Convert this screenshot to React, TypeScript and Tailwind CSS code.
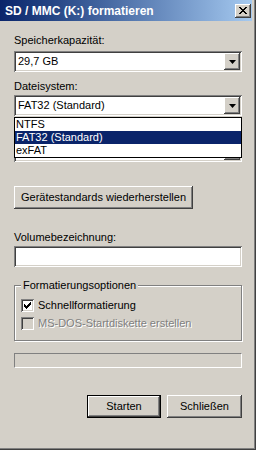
import React from "react";

const raised =
  "shadow-[inset_-1px_-1px_#404040,inset_1px_1px_#ffffff,inset_-2px_-2px_#808080,inset_2px_2px_#d4d0c8]";
const sunken =
  "shadow-[inset_1px_1px_#808080,inset_-1px_-1px_#ffffff,inset_2px_2px_#404040,inset_-2px_-2px_#d4d0c8]";

function DropButton() {
  return (
    <div className={`w-[16px] h-[17px] bg-[#d4d0c8] flex items-center justify-center ${raised}`}>
      <svg width="7" height="4" viewBox="0 0 7 4" className="mt-[1px]">
        <polygon points="0,0 7,0 3.5,4" fill="#000" />
      </svg>
    </div>
  );
}

function Combo({ value }: { value: string }) {
  return (
    <div className={`h-[21px] w-full bg-white flex items-center justify-between pl-[4px] pr-[2px] ${sunken}`}>
      <span className="leading-[13px]">{value}</span>
      <DropButton />
    </div>
  );
}

function CheckBox({ checked, disabled }: { checked?: boolean; disabled?: boolean }) {
  return (
    <div
      className={`w-[13px] h-[13px] shrink-0 flex items-center justify-center ${sunken} ${
        disabled ? "bg-[#d4d0c8]" : "bg-white"
      }`}
    >
      {checked && (
        <svg width="7" height="7" viewBox="0 0 7 7" shapeRendering="crispEdges">
          <path d="M0 2h1v1h1v1h1v-1h1v-1h1v-1h1v-1h1v3h-1v1h-1v1h-1v1h-1v1h-1v-1h-1v-1h-1z" fill="#000" />
        </svg>
      )}
    </div>
  );
}

export default function App() {
  return (
    <div className="w-[256px] h-[450px] bg-[#d4d0c8] text-[11px] text-black font-['Liberation_Sans',Arial,sans-serif] flex flex-col relative shadow-[inset_-1px_-1px_#404040,inset_-2px_-2px_#808080] overflow-hidden">
      {/* Title bar */}
      <div className="h-[21px] mr-[4px] bg-linear-to-r from-[#0a246a] to-[#a6caf0] flex items-center justify-between pl-[5px] pr-[1px]">
        <span className="text-white font-bold text-[12px] leading-[14px]">SD / MMC (K:) formatieren</span>
        <div className={`w-[16px] h-[14px] bg-[#d4d0c8] flex items-center justify-center ${raised}`}>
          <svg width="8" height="7" viewBox="0 0 8 7" shapeRendering="crispEdges">
            <path
              d="M0 0h2v1h1v1h2v-1h1v-1h2v1h-1v1h-1v1h-1v1h1v1h1v1h1v1h-2v-1h-1v-1h-2v1h-1v1h-2v-1h1v-1h1v-1h1v-1h-1v-1h-1v-1h-1z"
              fill="#000"
            />
          </svg>
        </div>
      </div>

      <div className="ml-[14px] w-[228px] flex flex-col">
        <div className="mt-[13px] leading-[13px]">Speicherkapazität:</div>
        <div className="mt-[4px]">
          <Combo value="29,7 GB" />
        </div>

        <div className="mt-[8px] leading-[13px]">Dateisystem:</div>
        <div className="mt-[2px] relative">
          <Combo value="FAT32 (Standard)" />
          {/* open dropdown list */}
          <div className="absolute left-0 top-[22px] w-[228px] bg-white border border-black z-10 flex flex-col leading-[13px]">
            <div className="px-[1px] h-[13px]">NTFS</div>
            <div className="px-[1px] h-[13px] bg-[#0a246a] text-white">FAT32 (Standard)</div>
            <div className="px-[1px] h-[13px]">exFAT</div>
          </div>
        </div>

        {/* allocation unit row, covered by the open list */}
        <div className="mt-[10px] h-[13px]" />
        <div className="mt-[2px]">
          <Combo value="" />
        </div>

        <button className={`mt-[24px] w-[179px] h-[23px] bg-[#d4d0c8] leading-[13px] ${raised}`}>
          Gerätestandards wiederherstellen
        </button>

        <div className="mt-[22px] leading-[13px]">Volumebezeichnung:</div>
        <div className={`mt-[2px] h-[21px] w-full bg-white ${sunken}`} />

        {/* Group box */}
        <div className="mt-[18px] relative h-[56px] border border-[#808080] shadow-[1px_1px_#ffffff,inset_1px_1px_#ffffff] pt-[13px] pl-[6px] flex flex-col gap-[5px]">
          <span className="absolute -top-[7px] left-[6px] px-[2px] bg-[#d4d0c8] leading-[13px]">
            Formatierungsoptionen
          </span>
          <div className="flex items-center gap-[4px] h-[13px]">
            <CheckBox checked />
            <span className="leading-[13px]">Schnellformatierung</span>
          </div>
          <div className="flex items-center gap-[4px] h-[13px]">
            <CheckBox disabled />
            <span className="leading-[13px] text-[#808080] [text-shadow:1px_1px_#ffffff]">
              MS-DOS-Startdiskette erstellen
            </span>
          </div>
        </div>

        {/* Progress bar */}
        <div className="mt-[12px] h-[15px] w-full border-t border-l border-[#808080] border-b-white border-r-white border-b border-r" />

        <div className="mt-[27px] flex justify-end gap-[6px]">
          <button className={`w-[74px] h-[23px] bg-[#d4d0c8] border border-black ${raised}`}>Starten</button>
          <button className={`w-[75px] h-[23px] bg-[#d4d0c8] ${raised}`}>Schließen</button>
        </div>
      </div>
    </div>
  );
}
